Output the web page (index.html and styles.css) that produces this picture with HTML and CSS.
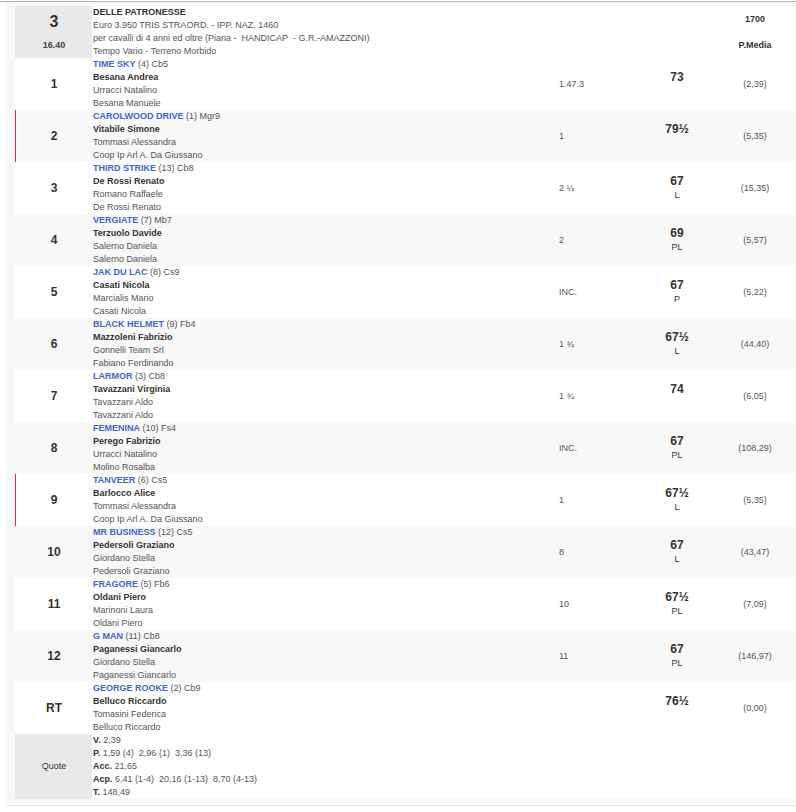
FILE: index.html
```html
<!DOCTYPE html>
<html lang="it">
<head>
<meta charset="utf-8">
<title>Corsa 3 - Delle Patronesse</title>
<link rel="stylesheet" href="styles.css">
</head>
<body>
<div class="topline"></div>
<div class="panel">
<table class="race">
<colgroup>
<col class="c-num"><col class="c-txt"><col class="c-time"><col class="c-wt"><col class="c-pm">
</colgroup>
<tbody>
<tr class="head">
<td class="num grey"><div class="bignum">3</div><div class="hour">16.40</div></td>
<td class="txt"><b class="dark">DELLE PATRONESSE</b><br>Euro 3.950 TRIS STRAORD. - IPP. NAZ. 1460<br>per cavalli di 4 anni ed oltre (Piana - &nbsp;HANDICAP &nbsp;- G.R.-AMAZZONI)<br>Tempo Vario - Terreno Morbido</td>
<td></td><td></td>
<td class="pm"><b class="dark">1700</b><br><br><b class="dark">P.Media</b></td>
</tr>
<tr>
<td class="num">1</td>
<td class="txt"><b class="horse">TIME SKY</b> (4) Cb5<br><b class="dark">Besana Andrea</b><br>Urracci Natalino<br>Besana Manuele</td>
<td class="time">1.47.3</td><td class="wt"><b>73</b><br>&nbsp;</td><td class="pm">(2,39)</td>
</tr>
<tr class="alt mark">
<td class="num">2</td>
<td class="txt"><b class="horse">CAROLWOOD DRIVE</b> (1) Mgr9<br><b class="dark">Vitabile Simone</b><br>Tommasi Alessandra<br>Coop Ip Arl A. Da Giussano</td>
<td class="time">1</td><td class="wt"><b>79½</b><br>&nbsp;</td><td class="pm">(5,35)</td>
</tr>
<tr>
<td class="num">3</td>
<td class="txt"><b class="horse">THIRD STRIKE</b> (13) Cb8<br><b class="dark">De Rossi Renato</b><br>Romano Raffaele<br>De Rossi Renato</td>
<td class="time">2 ¼</td><td class="wt"><b>67</b><br>L</td><td class="pm">(15,35)</td>
</tr>
<tr class="alt">
<td class="num">4</td>
<td class="txt"><b class="horse">VERGIATE</b> (7) Mb7<br><b class="dark">Terzuolo Davide</b><br>Salerno Daniela<br>Salerno Daniela</td>
<td class="time">2</td><td class="wt"><b>69</b><br>PL</td><td class="pm">(5,57)</td>
</tr>
<tr>
<td class="num">5</td>
<td class="txt"><b class="horse">JAK DU LAC</b> (8) Cs9<br><b class="dark">Casati Nicola</b><br>Marcialis Mario<br>Casati Nicola</td>
<td class="time">INC.</td><td class="wt"><b>67</b><br>P</td><td class="pm">(5,22)</td>
</tr>
<tr class="alt">
<td class="num">6</td>
<td class="txt"><b class="horse">BLACK HELMET</b> (9) Fb4<br><b class="dark">Mazzoleni Fabrizio</b><br>Gonnelli Team Srl<br>Fabiano Ferdinando</td>
<td class="time">1 ¾</td><td class="wt"><b>67½</b><br>L</td><td class="pm">(44,40)</td>
</tr>
<tr>
<td class="num">7</td>
<td class="txt"><b class="horse">LARMOR</b> (3) Cb8<br><b class="dark">Tavazzani Virginia</b><br>Tavazzani Aldo<br>Tavazzani Aldo</td>
<td class="time">1 ¾</td><td class="wt"><b>74</b><br>&nbsp;</td><td class="pm">(6,05)</td>
</tr>
<tr class="alt">
<td class="num">8</td>
<td class="txt"><b class="horse">FEMENINA</b> (10) Fs4<br><b class="dark">Perego Fabrizio</b><br>Urracci Natalino<br>Molino Rosalba</td>
<td class="time">INC.</td><td class="wt"><b>67</b><br>PL</td><td class="pm">(108,29)</td>
</tr>
<tr class="mark">
<td class="num">9</td>
<td class="txt"><b class="horse">TANVEER</b> (6) Cs5<br><b class="dark">Barlocco Alice</b><br>Tommasi Alessandra<br>Coop Ip Arl A. Da Giussano</td>
<td class="time">1</td><td class="wt"><b>67½</b><br>L</td><td class="pm">(5,35)</td>
</tr>
<tr class="alt">
<td class="num">10</td>
<td class="txt"><b class="horse">MR BUSINESS</b> (12) Cs5<br><b class="dark">Pedersoli Graziano</b><br>Giordano Stella<br>Pedersoli Graziano</td>
<td class="time">8</td><td class="wt"><b>67</b><br>L</td><td class="pm">(43,47)</td>
</tr>
<tr>
<td class="num">11</td>
<td class="txt"><b class="horse">FRAGORE</b> (5) Fb6<br><b class="dark">Oldani Piero</b><br>Marinoni Laura<br>Oldani Piero</td>
<td class="time">10</td><td class="wt"><b>67½</b><br>PL</td><td class="pm">(7,09)</td>
</tr>
<tr class="alt">
<td class="num">12</td>
<td class="txt"><b class="horse">G MAN</b> (11) Cb8<br><b class="dark">Paganessi Giancarlo</b><br>Giordano Stella<br>Paganessi Giancarlo</td>
<td class="time">11</td><td class="wt"><b>67</b><br>PL</td><td class="pm">(146,97)</td>
</tr>
<tr>
<td class="num">RT</td>
<td class="txt"><b class="horse">GEORGE ROOKE</b> (2) Cb9<br><b class="dark">Belluco Riccardo</b><br>Tomasini Federica<br>Belluco Riccardo</td>
<td class="time"></td><td class="wt"><b>76½</b><br>&nbsp;</td><td class="pm">(0,00)</td>
</tr>
<tr class="quote">
<td class="num grey qlabel">Quote</td>
<td class="txt"><b class="dark">V.</b> 2,39<br><b class="dark">P.</b> 1,59 (4) &nbsp;2,96 (1) &nbsp;3,36 (13)<br><b class="dark">Acc.</b> 21,65<br><b class="dark">Acp.</b> 6,41 (1-4) &nbsp;20,16 (1-13) &nbsp;8,70 (4-13)<br><b class="dark">T.</b> 148,49</td>
<td></td><td></td><td></td>
</tr>
</tbody>
</table>
</div>
</body>
</html>
```
FILE: styles.css
```css
html, body {
  margin: 0;
  padding: 0;
  background: #ffffff;
  font-family: "Liberation Sans", Arial, sans-serif;
}
.topline {
  margin-top: 1px;
  border-top: 1px solid #b4b4b4;
  height: 0;
}
.panel {
  margin-left: 7px;
  width: 787px;
  padding: 4px 0 6px 8px;
  background: #f8f8f8;
  border-bottom: 1px solid #e2e2e2;
  border-right: 1px solid #ececec;
}
.race {
  width: 779px;
  table-layout: fixed;
  border-collapse: separate;
  border-spacing: 0;
  font-size: 9px;
  line-height: 13px;
  color: #555555;
}
.c-num { width: 77px; }
.c-txt { width: 466px; }
.c-time { width: 80px; }
.c-wt { width: 78px; }
.c-pm { width: 78px; }
.race td {
  padding: 0;
  vertical-align: middle;
  background: #ffffff;
}
.race tr.alt td {
  background: #f8f8f8;
}
.race td.grey {
  background: #e9e9e9;
}
.race td.num {
  border-left: 1px solid transparent;
}
.race tr.mark td.num {
  border-left-color: #e8253c;
}
.num {
  text-align: center;
  font-size: 12px;
  font-weight: bold;
  color: #333333;
}
.bignum {
  font-size: 16px;
  line-height: 18px;
  padding-bottom: 8px;
}
.hour {
  font-size: 9px;
  line-height: 13px;
  font-weight: bold;
  color: #444444;
}
.txt {
  padding-left: 1px !important;
  vertical-align: top !important;
  white-space: nowrap;
}
.dark {
  color: #333333;
}
.horse {
  color: #3f66cc;
}
.time {
  padding-left: 1px !important;
}
.wt {
  text-align: center;
  color: #333333;
}
.wt b {
  display: inline-block;
  font-size: 12px;
  line-height: 15px;
  color: #333333;
}
.pm {
  text-align: center;
}
.qlabel {
  font-size: 9px;
  font-weight: normal;
  color: #333333;
}
```
